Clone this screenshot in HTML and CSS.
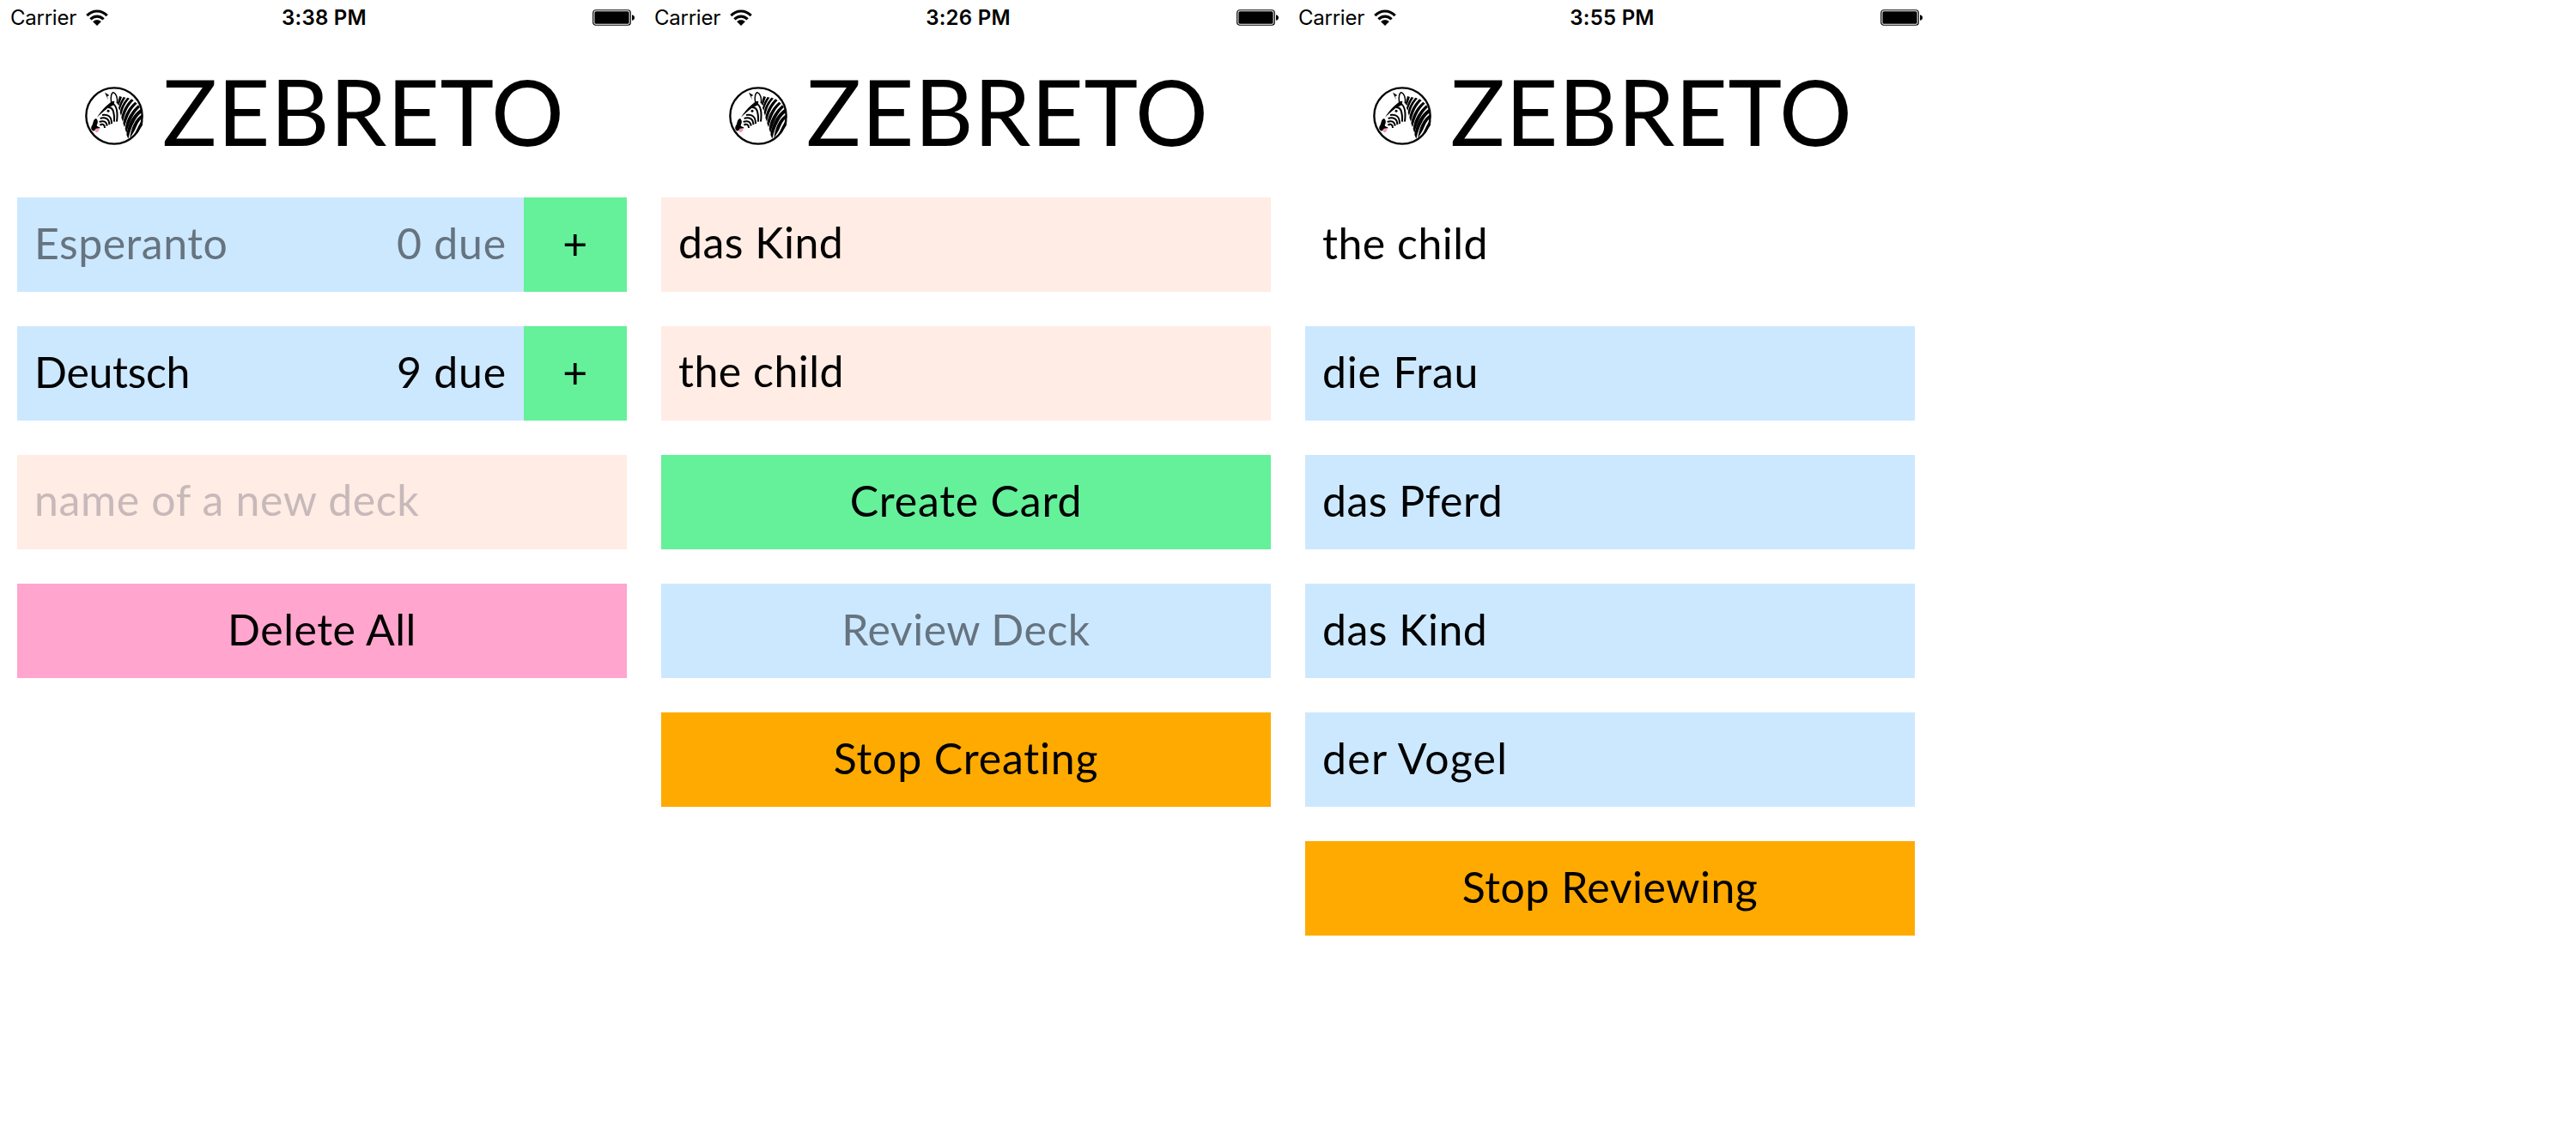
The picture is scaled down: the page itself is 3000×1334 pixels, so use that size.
FILE: index.html
```html
<!DOCTYPE html>
<html lang="en">
<head>
<meta charset="utf-8">
<title>Zebreto</title>
<link rel="stylesheet" href="styles.css">
</head>
<body>
<svg class="defs" aria-hidden="true">
  <symbol id="wifi" viewBox="0 0 26 19">
    <g fill="none" stroke="#000" stroke-width="3.1">
      <path d="M1.3 7.1C7.8 .2 18.2 .2 24.7 7.1"/>
      <path d="M5.4 11.4C9.6 7 16.4 7 20.6 11.4"/>
    </g>
    <path d="M8.2 14.2C10.8 11.6 15.2 11.6 17.8 14.2L13 19Z"/>
  </symbol>
  <symbol id="battery" viewBox="0 0 50 20">
    <rect x=".75" y=".75" width="43.5" height="17.5" rx="3" fill="none" stroke="#000" stroke-width="1.2"/>
    <rect x="2.4" y="2.2" width="40.2" height="14.6" rx="1.6"/>
    <path d="M46 6.2C50 6.8 50 12.2 46 12.8Z"/>
  </symbol>
  <symbol id="zebra" viewBox="27 30 204 204">
    <circle cx="129" cy="132" r="98" fill="#fff" stroke="#000" stroke-width="7"/>
    <path d="M96 50L112 60L105 64L108 76Z"/>
    <path d="M119 84C115 66 120 50 126 50C136 54 142 70 139 88" fill="none" stroke="#000" stroke-width="4.5"/>
    <path d="M130 80L120 82L103 96C90 108 78 122 69 137C82 126 94 114 106 105L128 94Z"/>
    <circle cx="108" cy="115" r="4.5"/>
    <path d="M66 141C55 145 57 154 53 163C47 170 47 180 54 184C60 187 63 181 66 177L80 175C79 169 70 172 68 165C72 158 74 148 66 141Z"/>
    <path d="M60 183L66 176L76 176C78 183 72 189 66 190Z" fill="#f49ac4"/>
    <g fill="none" stroke="#000" stroke-width="6">
      <path d="M108 103C123 99 130 116 129 152"/>
      <path d="M125 90C138 98 142 120 138 152"/>
      <path d="M87 129C104 126 121 132 120 160"/>
      <path d="M80 141C96 136 112 140 112 163"/>
      <path d="M77 153C90 148 103 150 104 167"/>
      <path d="M79 164C88 159 96 162 96 174"/>
    </g>
    <g>
      <path d="M147 63L156 66L145 96L140 90Z"/>
      <path d="M161 66L169 68C160 80 153 94 148 114L144 104C148 90 153 78 161 66Z"/>
      <path d="M175 68L183 71C168 86 160 104 153 132L149 120C152 98 163 82 175 68Z"/>
      <path d="M189 73L197 78C180 94 168 116 159 152L154 138C158 112 172 90 189 73Z"/>
      <path d="M202 83L209 89C190 104 176 130 165 172L160 158C164 126 182 100 202 83Z"/>
      <path d="M213 94L219 102C200 118 184 146 172 192L167 178C171 142 190 114 213 94Z"/>
      <path d="M221 108L227 119C206 134 190 162 178 212L172 198C178 156 196 126 221 108Z"/>
      <path d="M227 126L229 138C210 152 208 170 200 184L184 210C188 176 200 144 227 126Z"/>
      <path d="M229 148L228 164C220 176 212 190 198 202C208 182 212 164 229 148Z"/>
    </g>
  </symbol>
</svg>

<main class="screens">
  <section class="screen">
    <div class="status">
      <div class="carrier">Carrier <svg class="wifi"><use href="#wifi"/></svg></div>
      <div class="clock">3:38 PM</div>
      <svg class="battery"><use href="#battery"/></svg>
    </div>
    <header class="brand"><svg class="logo"><use href="#zebra"/></svg><h1 class="title">ZEBRETO</h1></header>
    <div class="rows">
      <div class="deck">
        <div class="row blue deck-info disabled"><span>Esperanto</span><span class="due">0 due</span></div>
        <div class="row green add">+</div>
      </div>
      <div class="deck">
        <div class="row blue deck-info"><span class="snug">Deutsch</span><span class="due">9 due</span></div>
        <div class="row green add">+</div>
      </div>
      <div class="row field placeholder">name of a new deck</div>
      <div class="row pink action">Delete All</div>
    </div>
  </section>

  <section class="screen">
    <div class="status">
      <div class="carrier">Carrier <svg class="wifi"><use href="#wifi"/></svg></div>
      <div class="clock">3:26 PM</div>
      <svg class="battery"><use href="#battery"/></svg>
    </div>
    <header class="brand"><svg class="logo"><use href="#zebra"/></svg><h1 class="title">ZEBRETO</h1></header>
    <div class="rows">
      <div class="row field">das Kind</div>
      <div class="row field">the child</div>
      <div class="row green action loose">Create Card</div>
      <div class="row blue action disabled">Review Deck</div>
      <div class="row orange action loose">Stop Creating</div>
    </div>
  </section>

  <section class="screen">
    <div class="status">
      <div class="carrier">Carrier <svg class="wifi"><use href="#wifi"/></svg></div>
      <div class="clock">3:55 PM</div>
      <svg class="battery"><use href="#battery"/></svg>
    </div>
    <header class="brand"><svg class="logo"><use href="#zebra"/></svg><h1 class="title">ZEBRETO</h1></header>
    <div class="rows">
      <div class="row">the child</div>
      <div class="row blue loose">die Frau</div>
      <div class="row blue">das Pferd</div>
      <div class="row blue">das Kind</div>
      <div class="row blue looser">der Vogel</div>
      <div class="row orange action">Stop Reviewing</div>
    </div>
  </section>
</main>
</body>
</html>
```
FILE: styles.css
```css
* { box-sizing: border-box; }

body {
  margin: 0;
  background: #fff;
  color: #000;
  font-family: Lato, "Open Sans", sans-serif;
}

.defs { display: none; }

.screens { display: flex; }

.screen {
  width: 750px;
  height: 1334px;
}

.status {
  display: grid;
  grid-template-columns: 1fr auto 1fr;
  align-items: center;
  height: 40px;
  padding: 1px 10px 0 12px;
  font: 24px/39px Inter, sans-serif;
}

.carrier {
  display: flex;
  align-items: center;
  gap: 11px;
  letter-spacing: -0.25px;
}

.clock {
  padding-left: 3px;
  font-weight: 600;
  letter-spacing: 0.25px;
}

.wifi { width: 26px; height: 19px; }

.battery {
  width: 50px;
  height: 20px;
  justify-self: end;
}

.brand {
  display: flex;
  align-items: center;
  gap: 22px;
  height: 190px;
  padding-left: 99px;
}

.logo {
  width: 68px;
  height: 68px;
}

.title {
  margin: 0;
  padding-bottom: 13px;
  font-size: 106px;
  font-weight: 400;
  line-height: 128px;
  letter-spacing: 0.45px;
}

.rows {
  display: flex;
  flex-direction: column;
  gap: 40px;
  padding: 0 20px;
}

.row {
  height: 110px;
  padding: 0 20px 4px;
  font-size: 50px;
  line-height: 106px;
  letter-spacing: 0.5px;
  white-space: nowrap;
}

.action, .add { text-align: center; }

.deck { display: flex; }

.deck-info {
  display: flex;
  flex: 1;
  justify-content: space-between;
}

.due { letter-spacing: 0.8px; }

.add { width: 120px; }

.field {
  background: #ffece4;
  line-height: 104px;
}

.placeholder { color: #c7b9ba; letter-spacing: 0.65px; }

.blue { background: #cce8ff; }
.green { background: #65f09a; }
.pink { background: #ffa5ce; }
.orange { background: #ffaa00; }

.disabled { color: #667480; }

.snug { letter-spacing: -0.3px; }
.loose { letter-spacing: 0.8px; }
.looser { letter-spacing: 1.3px; }
```
